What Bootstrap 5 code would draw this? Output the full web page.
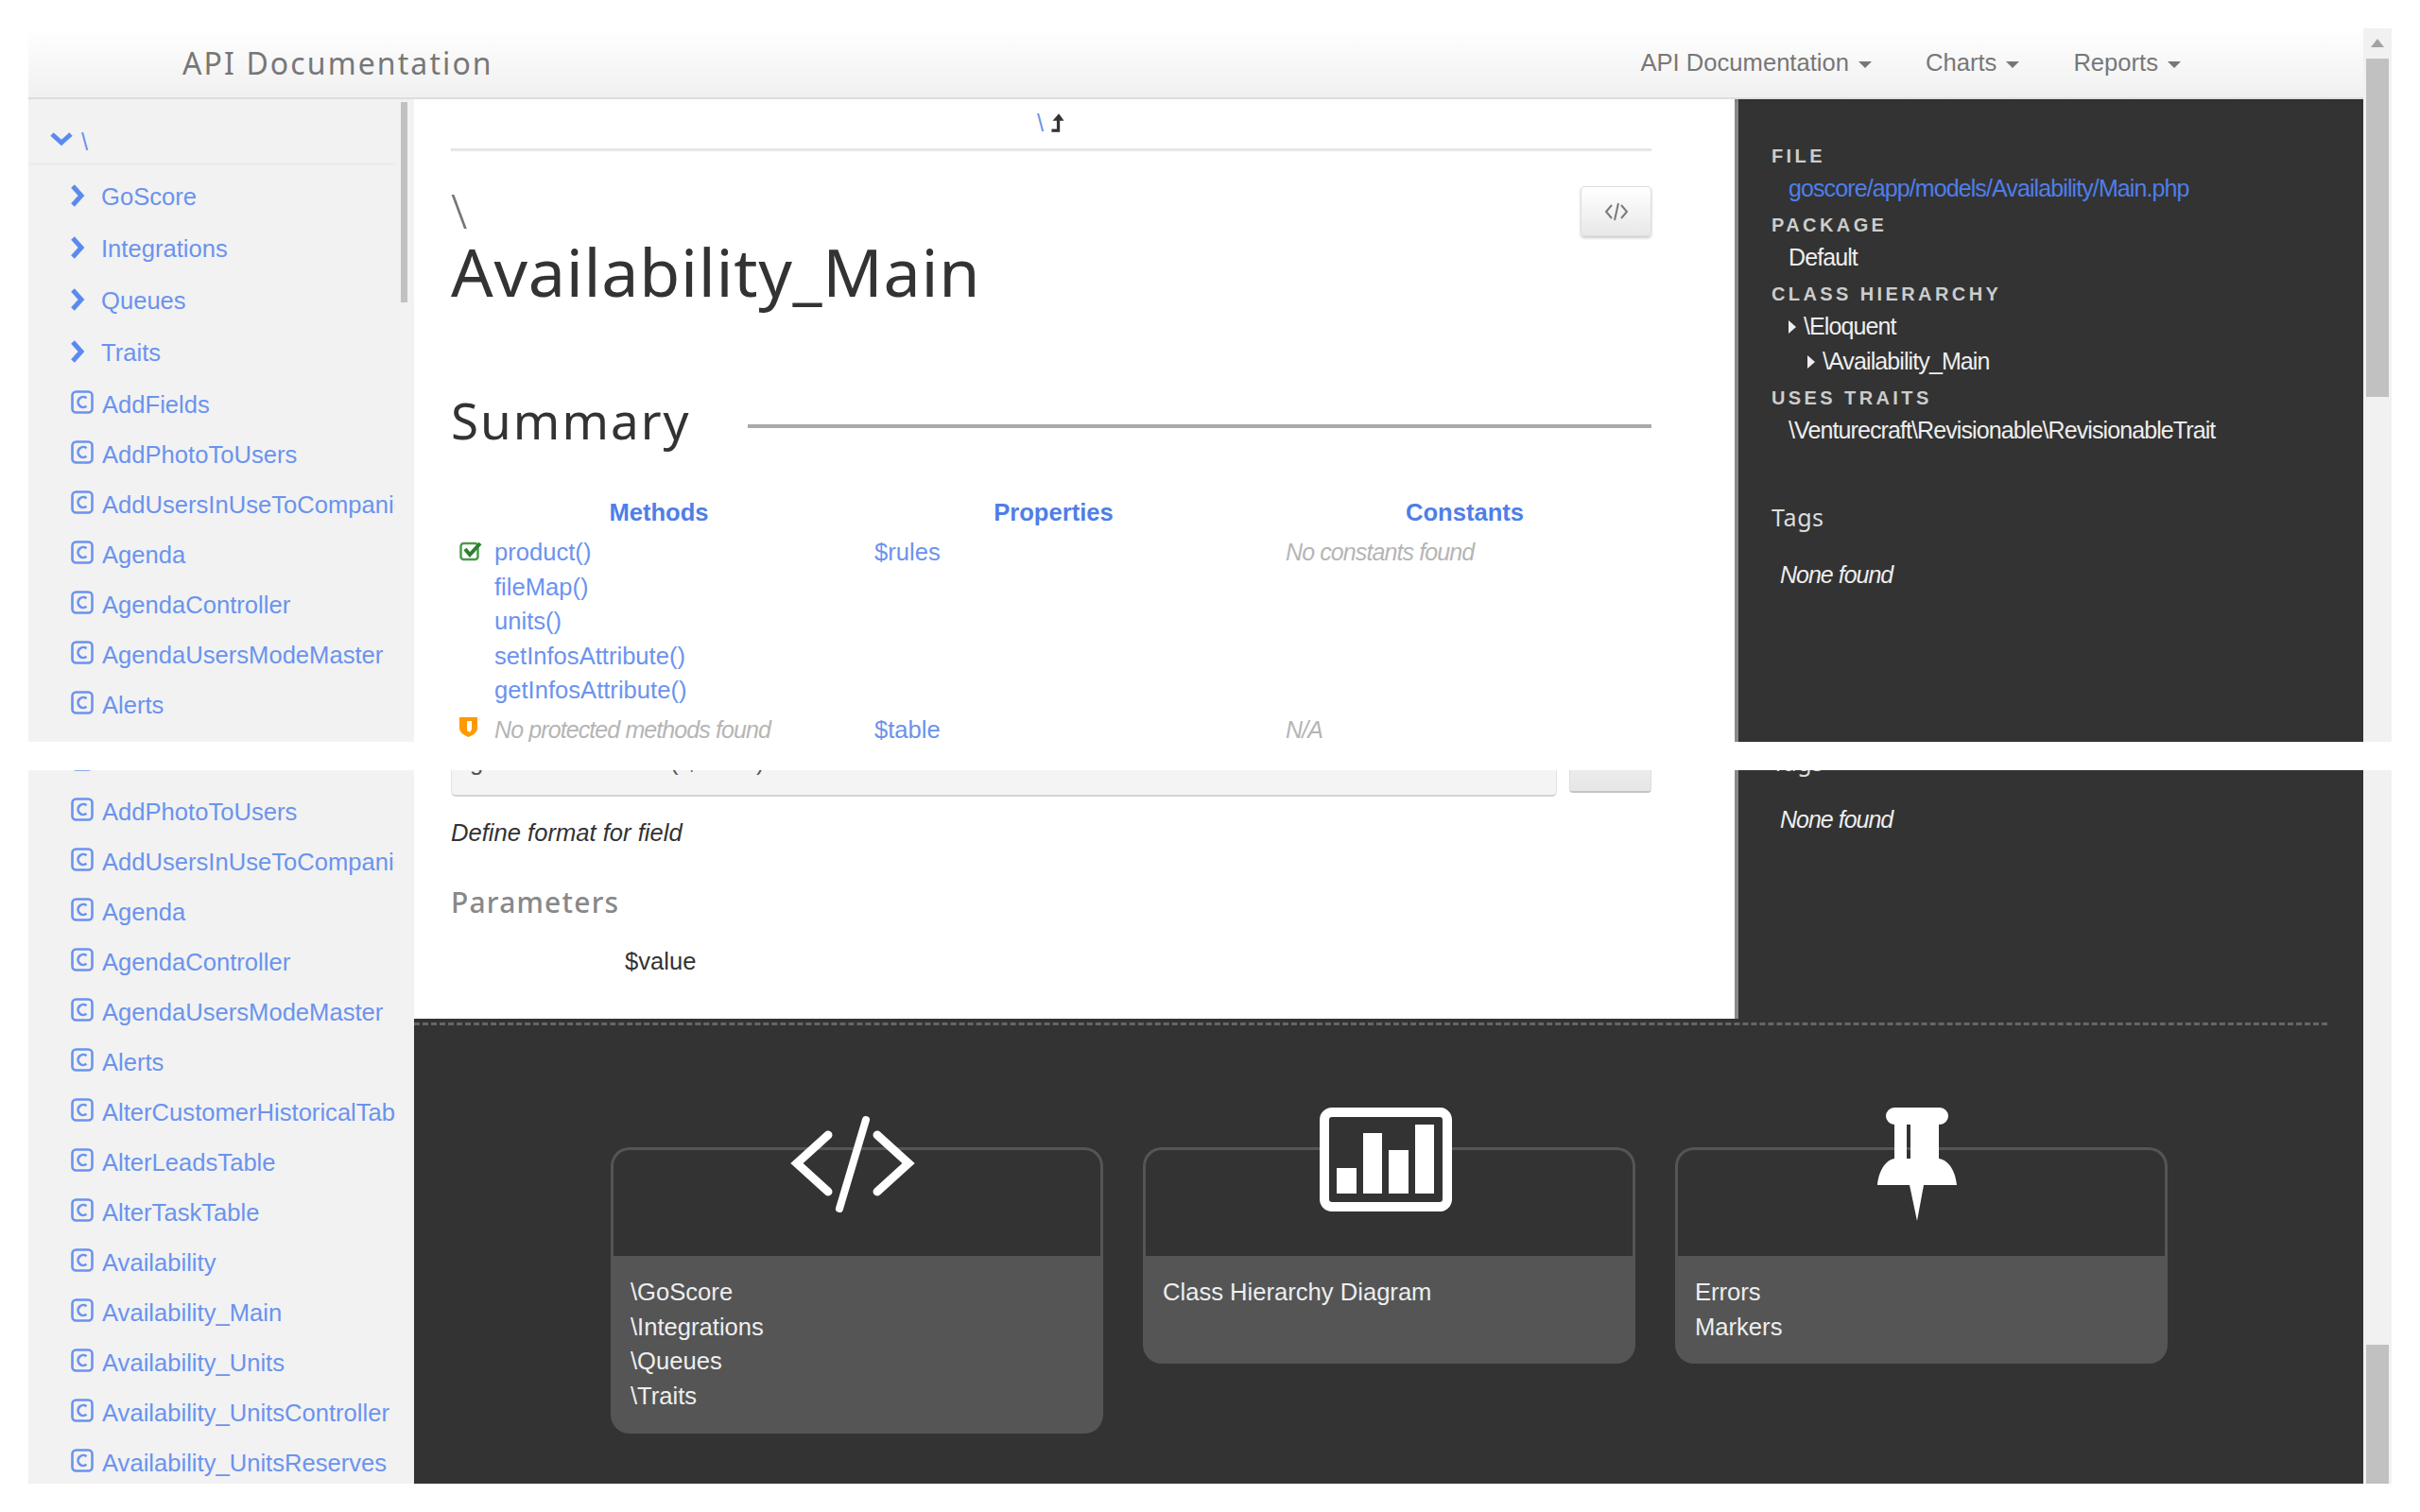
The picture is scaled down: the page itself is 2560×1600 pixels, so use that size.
<!DOCTYPE html>
<html lang="en">
<head>
  <meta charset="UTF-8">
  <meta name="viewport" content="width=device-width, initial-scale=1.0">
  <title>API Documentation</title>
  <link href="https://cdn.jsdelivr.net/npm/bootstrap@5.3.3/dist/css/bootstrap.min.css" rel="stylesheet">
  <style>
    html, body { height: 100%; }
    body { background: #fff; font-family: "Liberation Sans", Arial, sans-serif; font-size: 25.6px; color: #333; overflow: hidden; padding: 30px 30px 30px 30px; }
    a { color: #6b93ee; text-decoration: none; }
    .shot { height: 755px; overflow: hidden; }
    .shot + .shot { margin-top: 30px; }
    .shot-left { min-width: 0; }
    .fake-scroll { width: 30px; background: #f1f1f1; flex: none; position: relative; }
    .fake-thumb { position: absolute; left: 3px; width: 24px; background: #c1c1c1; }
    .thumb-top { top: 32px; height: 358px; }
    .thumb-bottom { bottom: 0; height: 147px; }
    .fake-up { position: absolute; left: 8px; top: 11px; width: 0; height: 0; border: 7px solid transparent; border-top: 0; border-bottom: 9px solid #a3a3a3; }
    .top-bar { height: 75px; flex: none; padding: 0 0 0 163px; background: linear-gradient(#fff, #f0f0f0); border-bottom: 2px solid #ddd; box-shadow: 0 2px 4px rgba(0,0,0,.08); }
    .brand-name { font-family: "Noto Sans", sans-serif; font-size: 32px; color: #777; letter-spacing: 2.1px; padding: 0; margin: 0; }
    .top-bar .nav-link { color: #777; padding: 0; }
    .top-bar .nav-item { margin-right: 41px; }
    .top-bar .nav-item:last-child { margin-right: 185px; }
    .top-bar .dropdown-toggle::after { margin-left: 10px; vertical-align: 3px; border-top-width: 7px; border-left-width: 7px; border-right-width: 7px; }
    .side-tree { width: 408px; flex: none; background: #f2f2f2; position: relative; overflow: hidden; }
    .side-head { height: 70px; margin-right: 20px; border-bottom: 3px solid #ececec; padding: 26px 0 0 22px; }
    .side-gap { height: 14px; }
    .side-scrolled { margin-top: -28px; }
    .side-folder { height: 55px; padding-left: 44px; }
    .side-class { height: 53px; padding-left: 45px; white-space: nowrap; }
    .side-folder svg { width: 16px; height: 26px; margin-right: 17px; flex: none; position: relative; top: 5px; }
    .side-class svg { width: 25px; height: 26px; margin-right: 8px; flex: none; position: relative; top: 4px; }
    .side-class a { display: block; width: 310px; overflow: hidden; }
    .side-thumb { position: absolute; right: 7px; top: 3px; width: 7px; height: 212px; background: #c1c1c1; }
    .doc-main { background: #fff; padding: 0 88px 0 39px; flex: none; width: 1397px; overflow: hidden; position: relative; }
    .ns-up { text-align: center; height: 55px; line-height: 50px; border-bottom: 3px solid #e6e6e6; }
    .ns-up svg { width: 16px; height: 24px; vertical-align: -3px; }
    .ns-big { font-family: "Noto Sans", sans-serif; font-size: 50px; font-weight: 300; color: #777; margin: 38px 0 0; line-height: 50px; }
    .class-title { font-family: "Noto Sans", sans-serif; font-size: 70px; font-weight: 400; color: #333; letter-spacing: .7px; line-height: 80px; margin: -1px 0 0; }
    .src-btn { position: absolute; right: 88px; top: 92px; width: 75px; height: 53px; padding: 0; background: linear-gradient(#fff, #e8e8e8); border: 1px solid #ddd; border-radius: 4px; box-shadow: 0 2px 3px rgba(0,0,0,.2); }
    .src-btn svg { width: 28px; height: 22px; }
    .sum-head { margin-top: 83px; height: 70px; }
    .sum-head h2 { font-family: "Noto Sans", sans-serif; font-size: 53px; font-weight: 400; letter-spacing: 2px; color: #333; margin: 0 60px 0 0; line-height: 70px; }
    .sum-rule { flex: 1; height: 4px; background: #aaa; margin-top: 11px; }
    .sum-grid { display: grid; grid-template-columns: 440px 395px 435px; margin-top: 42px; line-height: 36.6px; }
    .sum-grid > div { position: relative; }
    .sum-h { font-weight: 700; color: #4f7ee8; text-align: center; line-height: 40px; padding-bottom: 4px; }
    .sum-h-last { padding-left: 40px; }
    .sum-c1 { padding-left: 46px; }
    .sum-c2 { padding-left: 8px; }
    .sum-c3 { padding-left: 48px; }
    .sum-pad { padding-top: 5px; }
    .muted-it { font-style: italic; color: #b5b5b5; font-size: 25px; letter-spacing: -.9px; }
    .sum-ic { position: absolute; left: 9px; width: 25px; height: 22px; }
    .ic-check { top: 6px; }
    .ic-shield { top: 10px; }
    .code-line { height: 60px; margin-top: -32px; background: #f4f4f4; border: 1px solid #e3e3e3; border-bottom: 2px solid #d3d3d3; border-radius: 5px; padding: 7px 0 0 19px; line-height: 30px; color: #555; width: 1170px; }
    .code-line i { color: #b34a4a; font-style: normal; }
    .code-go { width: 87px; height: 56px; margin-top: -32px; margin-left: 13px; background: linear-gradient(#f4f4f4, #e6e6e6); border: 1px solid #ddd; border-bottom: 2px solid #c4c4c4; border-radius: 4px; padding: 0; }
    .field-desc { margin: 20px 0 0; line-height: 36px; }
    .param-title { font-family: "Noto Sans", sans-serif; font-size: 30px; color: #888; letter-spacing: 1.2px; line-height: 40px; margin: 36px 0 0; }
    .param-row { margin-top: 27px; padding-left: 184px; line-height: 30px; }
    .doc-strip { height: 263px; flex: none; }
    .dark-panel { flex: 1; background: #333; border-left: 4px solid #888; padding-left: 35px; color: #eee; font-size: 25px; letter-spacing: -.9px; overflow: hidden; }
    .panel-top { height: 48px; }
    .meta-label { font-size: 20px; font-weight: 700; letter-spacing: 3.4px; color: #ccc; line-height: 24px; margin-bottom: 4px; text-transform: uppercase; }
    .meta-val { line-height: 36.6px; padding-left: 18px; height: 37px; margin-bottom: 8px; }
    .meta-val a { color: #4f7ee8; }
    .meta-tree { margin-bottom: 0; }
    .meta-tree2 { padding-left: 38px; }
    .tree-arrow { display: inline-block; width: 0; height: 0; border: 7px solid transparent; border-left: 8px solid #eee; border-right: 0; margin-right: 8px; vertical-align: 1px; }
    .tags-head { font-family: "Noto Sans", sans-serif; font-size: 25px; color: #ddd; letter-spacing: .6px; line-height: 32px; margin-top: 57px; }
    .tags-head.tags-scrolled { margin-top: -25px; }
    .tags-none { font-style: italic; padding-left: 9px; margin-top: 27px; letter-spacing: -1px; }
    .dock { background: #333; flex: 1; padding: 4px 38px 0 0; }
    .dock-rule { border-top: 3px dashed #666; }
    .dock-cards { padding: 129px 0 0 208px; gap: 42px; }
    .dock-card { width: 521px; background: transparent; border: 0; border-radius: 20px; position: relative; color: #eee; }
    .dock-card .card-header { height: 115px; background: transparent; border: 3px solid #555; border-bottom: 0; border-radius: 20px 20px 0 0; padding: 0; }
    .dock-card .card-body { background: #555; border-radius: 0 0 20px 20px; padding: 20px 20px 21px 21px; line-height: 36.7px; flex: none; }
    .dock-ic { position: absolute; }
    .ic-code { left: 188px; top: -34px; }
    .ic-chart { left: 187px; top: -42px; }
    .ic-pin { left: 214px; top: -42px; }
  </style>
</head>
<body>
  <svg width="0" height="0" class="position-absolute">
    <symbol id="ic-class" viewBox="0 0 25 26">
      <rect x="1.500" y="1.500" width="21" height="22" rx="4" fill="none" stroke="#6b93ee" stroke-width="2.600"/>
      <path d="M16.500 8.200A5.500 5.500 0 1 0 16.500 16.800" fill="none" stroke="#6b93ee" stroke-width="2.600"/>
    </symbol>
    <symbol id="ic-chev" viewBox="0 0 16 26">
      <path d="M3 3l9 10-9 10" fill="none" stroke="#5b8aee" stroke-width="5"/>
    </symbol>
    <symbol id="ic-code" viewBox="0 0 28 22">
      <path d="M9 4L3 11l6 7M19 4l6 7-6 7M16 2l-4 18" fill="none" stroke="#7a7a7a" stroke-width="2"/>
    </symbol>
  </svg>

  <div class="shot d-flex">
    <div class="flex-grow-1 d-flex flex-column shot-left">
      <nav class="navbar navbar-expand top-bar">
        <a class="navbar-brand brand-name" href="#">API Documentation</a>
        <ul class="navbar-nav ms-auto">
          <li class="nav-item"><a class="nav-link dropdown-toggle" href="#">API Documentation</a></li>
          <li class="nav-item"><a class="nav-link dropdown-toggle" href="#">Charts</a></li>
          <li class="nav-item"><a class="nav-link dropdown-toggle" href="#">Reports</a></li>
        </ul>
      </nav>
      <div class="d-flex flex-grow-1 overflow-hidden">
        <div class="side-tree">
          <div class="side-thumb"></div>
          <div class="side-head d-flex"><svg width="26" height="16" viewBox="0 0 26 16" class="me-2 mt-2"><path d="M3 3l10 9 10-9" fill="none" stroke="#5b8aee" stroke-width="5"/></svg><a href="#">\</a></div>
          <div class="side-gap"></div>
          <div class="side-folder d-flex"><svg><use href="#ic-chev"/></svg><a href="#">GoScore</a></div>
          <div class="side-folder d-flex"><svg><use href="#ic-chev"/></svg><a href="#">Integrations</a></div>
          <div class="side-folder d-flex"><svg><use href="#ic-chev"/></svg><a href="#">Queues</a></div>
          <div class="side-folder d-flex"><svg><use href="#ic-chev"/></svg><a href="#">Traits</a></div>
          <div class="side-class d-flex"><svg><use href="#ic-class"/></svg><a href="#">AddFields</a></div>
          <div class="side-class d-flex"><svg><use href="#ic-class"/></svg><a href="#">AddPhotoToUsers</a></div>
          <div class="side-class d-flex"><svg><use href="#ic-class"/></svg><a href="#">AddUsersInUseToCompanies</a></div>
          <div class="side-class d-flex"><svg><use href="#ic-class"/></svg><a href="#">Agenda</a></div>
          <div class="side-class d-flex"><svg><use href="#ic-class"/></svg><a href="#">AgendaController</a></div>
          <div class="side-class d-flex"><svg><use href="#ic-class"/></svg><a href="#">AgendaUsersModeMaster</a></div>
          <div class="side-class d-flex"><svg><use href="#ic-class"/></svg><a href="#">Alerts</a></div>
        </div>
        <div class="doc-main">
          <div class="ns-up"><a href="#">\</a> <svg viewBox="0 0 14 22"><path d="M8 2L2 9h4v8H1v3h8V9h4z" fill="#333"/></svg></div>
          <button class="btn src-btn" type="button"><svg><use href="#ic-code"/></svg></button>
          <div class="ns-big">\</div>
          <h1 class="class-title">Availability_Main</h1>
          <div class="sum-head d-flex align-items-center">
            <h2>Summary</h2>
            <div class="sum-rule"></div>
          </div>
          <div class="sum-grid">
            <div class="sum-h">Methods</div>
            <div class="sum-h">Properties</div>
            <div class="sum-h sum-h-last">Constants</div>
            <div class="sum-c1">
              <svg class="sum-ic ic-check" viewBox="0 0 25 22"><rect x="1.500" y="3" width="18" height="17" rx="3" fill="none" stroke="#4c9a4c" stroke-width="2.500"/><path d="M6 9l5 6L22 3" fill="none" stroke="#2f7f2f" stroke-width="4"/></svg>
              <a href="#">product()</a><br><a href="#">fileMap()</a><br><a href="#">units()</a><br><a href="#">setInfosAttribute()</a><br><a href="#">getInfosAttribute()</a>
            </div>
            <div class="sum-c2"><a href="#">$rules</a></div>
            <div class="sum-c3 muted-it">No constants found</div>
            <div class="sum-c1 muted-it sum-pad">
              <svg class="sum-ic ic-shield" viewBox="0 0 25 22"><path d="M0 0h19v12q0 5-9.500 9Q0 17 0 12z" fill="#f90"/><path d="M8 4h5v9l-2 3-3-2z" fill="#fff"/></svg>
              No protected methods found
            </div>
            <div class="sum-c2 sum-pad"><a href="#">$table</a></div>
            <div class="sum-c3 muted-it sum-pad">N/A</div>
          </div>
        </div>
        <div class="dark-panel">
          <div class="panel-top"></div>
          <div class="meta-label">File</div>
          <div class="meta-val"><a href="#">goscore/app/models/Availability/Main.php</a></div>
          <div class="meta-label">Package</div>
          <div class="meta-val">Default</div>
          <div class="meta-label">Class Hierarchy</div>
          <div class="meta-val meta-tree"><span class="tree-arrow"></span>\Eloquent</div>
          <div class="meta-val meta-tree2"><span class="tree-arrow"></span>\Availability_Main</div>
          <div class="meta-label">Uses Traits</div>
          <div class="meta-val">\Venturecraft\Revisionable\RevisionableTrait</div>
          <div class="tags-head">Tags</div>
          <div class="tags-none">None found</div>
        </div>
      </div>
    </div>
    <div class="fake-scroll"><div class="fake-up"></div><div class="fake-thumb thumb-top"></div></div>
  </div>

  <div class="shot d-flex">
    <div class="flex-grow-1 d-flex shot-left">
      <div class="side-tree">
        <div class="side-scrolled"></div>
        <div class="side-class d-flex"><svg><use href="#ic-class"/></svg><a href="#">AddFields</a></div>
        <div class="side-class d-flex"><svg><use href="#ic-class"/></svg><a href="#">AddPhotoToUsers</a></div>
        <div class="side-class d-flex"><svg><use href="#ic-class"/></svg><a href="#">AddUsersInUseToCompanies</a></div>
        <div class="side-class d-flex"><svg><use href="#ic-class"/></svg><a href="#">Agenda</a></div>
        <div class="side-class d-flex"><svg><use href="#ic-class"/></svg><a href="#">AgendaController</a></div>
        <div class="side-class d-flex"><svg><use href="#ic-class"/></svg><a href="#">AgendaUsersModeMaster</a></div>
        <div class="side-class d-flex"><svg><use href="#ic-class"/></svg><a href="#">Alerts</a></div>
        <div class="side-class d-flex"><svg><use href="#ic-class"/></svg><a href="#">AlterCustomerHistoricalTable</a></div>
        <div class="side-class d-flex"><svg><use href="#ic-class"/></svg><a href="#">AlterLeadsTable</a></div>
        <div class="side-class d-flex"><svg><use href="#ic-class"/></svg><a href="#">AlterTaskTable</a></div>
        <div class="side-class d-flex"><svg><use href="#ic-class"/></svg><a href="#">Availability</a></div>
        <div class="side-class d-flex"><svg><use href="#ic-class"/></svg><a href="#">Availability_Main</a></div>
        <div class="side-class d-flex"><svg><use href="#ic-class"/></svg><a href="#">Availability_Units</a></div>
        <div class="side-class d-flex"><svg><use href="#ic-class"/></svg><a href="#">Availability_UnitsController</a></div>
        <div class="side-class d-flex"><svg><use href="#ic-class"/></svg><a href="#">Availability_UnitsReserves</a></div>
      </div>
      <div class="flex-grow-1 d-flex flex-column shot-left">
        <div class="d-flex doc-strip">
          <div class="doc-main">
            <div class="d-flex">
              <div class="code-line">getFormatAttribute( <i>$value</i>)</div>
              <button class="btn code-go" type="button"></button>
            </div>
            <p class="fst-italic field-desc">Define format for field</p>
            <h3 class="param-title">Parameters</h3>
            <div class="param-row">$value</div>
          </div>
          <div class="dark-panel">
            <div class="tags-head tags-scrolled">Tags</div>
            <div class="tags-none">None found</div>
          </div>
        </div>
        <div class="dock">
          <div class="dock-rule"></div>
          <div class="d-flex align-items-start dock-cards">
            <div class="card dock-card">
              <svg class="dock-ic ic-code" width="136" height="104" viewBox="0 0 136 104">
                <path d="M42 21L9 51l33 30M94 21l33 30-33 30" fill="none" stroke="#fff" stroke-width="9" stroke-linecap="round"/>
                <path d="M82 5L54 99" fill="none" stroke="#fff" stroke-width="8" stroke-linecap="round"/>
              </svg>
              <div class="card-header"></div>
              <div class="card-body"><div>\GoScore</div><div>\Integrations</div><div>\Queues</div><div>\Traits</div></div>
            </div>
            <div class="card dock-card">
              <svg class="dock-ic ic-chart" width="140" height="110" viewBox="0 0 140 110">
                <rect x="5" y="5" width="130" height="100" rx="8" fill="#333" stroke="#fff" stroke-width="10"/>
                <path fill="#fff" d="M18 64h21v27H18zM46 27h20v64H46zM73 45h21v46H73zM101 18h20v73h-20z"/>
              </svg>
              <div class="card-header"></div>
              <div class="card-body"><div>Class Hierarchy Diagram</div><div>&nbsp;</div></div>
            </div>
            <div class="card dock-card">
              <svg class="dock-ic ic-pin" width="84" height="120" viewBox="0 0 84 120">
                <path fill="#fff" fill-rule="evenodd" d="M18 0h48a9 9 0 0 1 0 18h-1v36c12 2 18 16 19 28H49l-7 38-8-38H0c1-12 7-26 18-28V18a9 9 0 0 1 0-18zM31 18v36h4V18z"/>
              </svg>
              <div class="card-header"></div>
              <div class="card-body"><div>Errors</div><div>Markers</div></div>
            </div>
          </div>
        </div>
      </div>
    </div>
    <div class="fake-scroll"><div class="fake-thumb thumb-bottom"></div></div>
  </div>

  <script src="https://cdn.jsdelivr.net/npm/bootstrap@5.3.3/dist/js/bootstrap.bundle.min.js"></script>
</body>
</html>
